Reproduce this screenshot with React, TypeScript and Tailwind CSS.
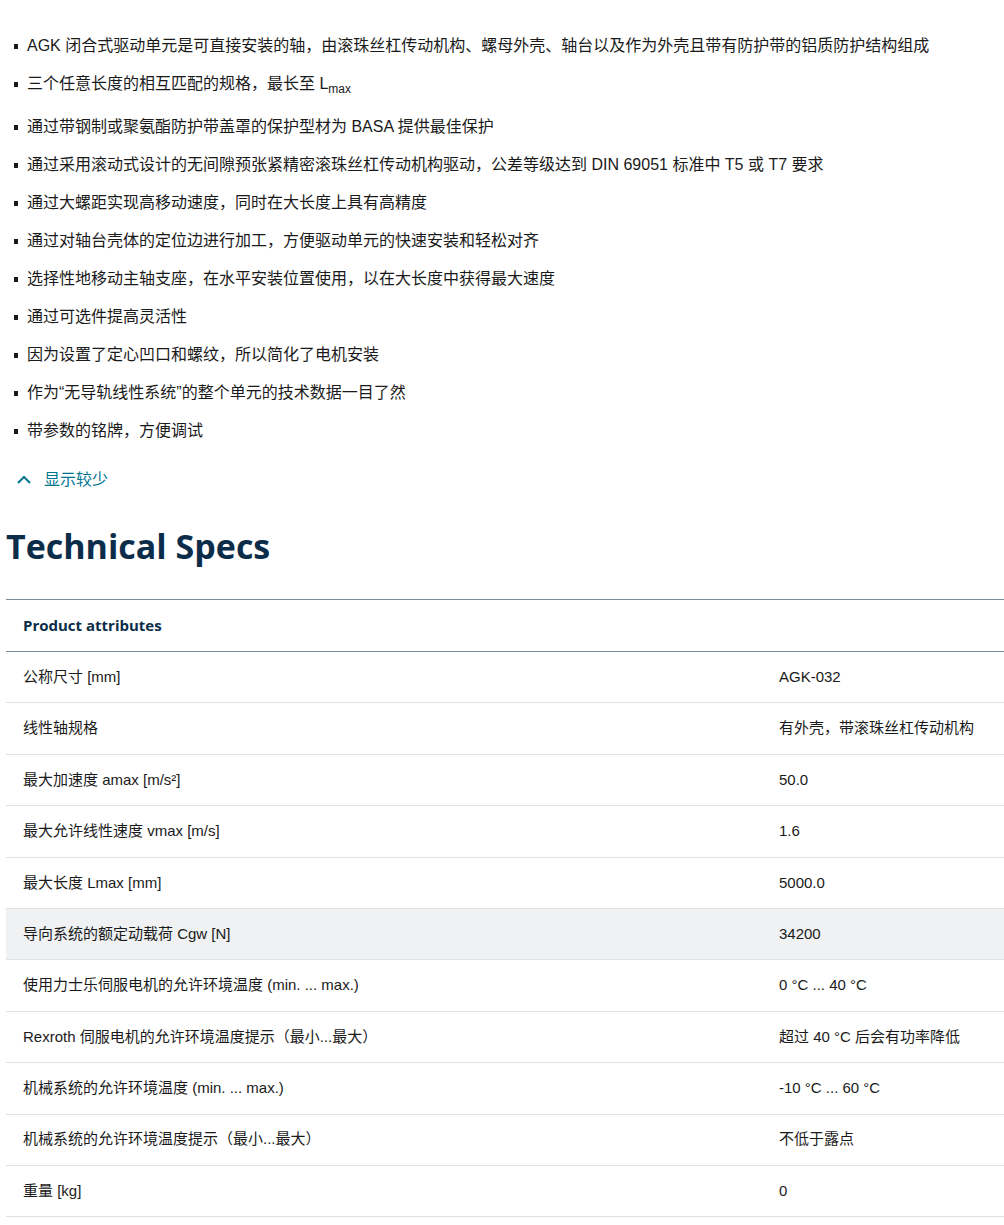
import React from "react";

const bullets: React.ReactNode[] = [
  "AGK 闭合式驱动单元是可直接安装的轴，由滚珠丝杠传动机构、螺母外壳、轴台以及作为外壳且带有防护带的铝质防护结构组成",
  <>三个任意长度的相互匹配的规格，最长至 L<sub className="text-[12px] relative top-[4px] align-baseline">max</sub></>,
  "通过带钢制或聚氨酯防护带盖罩的保护型材为 BASA 提供最佳保护",
  "通过采用滚动式设计的无间隙预张紧精密滚珠丝杠传动机构驱动，公差等级达到 DIN 69051 标准中 T5 或 T7 要求",
  "通过大螺距实现高移动速度，同时在大长度上具有高精度",
  "通过对轴台壳体的定位边进行加工，方便驱动单元的快速安装和轻松对齐",
  "选择性地移动主轴支座，在水平安装位置使用，以在大长度中获得最大速度",
  "通过可选件提高灵活性",
  "因为设置了定心凹口和螺纹，所以简化了电机安装",
  "作为“无导轨线性系统”的整个单元的技术数据一目了然",
  "带参数的铭牌，方便调试",
];

const rows: [string, string][] = [
  ["公称尺寸 [mm]", "AGK-032"],
  ["线性轴规格", "有外壳，带滚珠丝杠传动机构"],
  ["最大加速度 amax [m/s²]", "50.0"],
  ["最大允许线性速度 vmax [m/s]", "1.6"],
  ["最大长度 Lmax [mm]", "5000.0"],
  ["导向系统的额定动载荷 Cgw [N]", "34200"],
  ["使用力士乐伺服电机的允许环境温度 (min. ... max.)", "0 °C ... 40 °C"],
  ["Rexroth 伺服电机的允许环境温度提示（最小...最大）", "超过 40 °C 后会有功率降低"],
  ["机械系统的允许环境温度 (min. ... max.)", "-10 °C ... 60 °C"],
  ["机械系统的允许环境温度提示（最小...最大）", "不低于露点"],
  ["重量 [kg]", "0"],
];

export default function App() {
  return (
    <div className="w-[1004px] bg-white text-[#1a1a1a]" style={{ fontFamily: '"Liberation Sans","Noto Sans CJK SC",sans-serif' }}>
      <ul className="pt-[33px] pl-[14px]">
        {bullets.map((b, i) => (
          <li key={i} className={`flex items-start text-[16px] leading-[26px] ${i === 1 ? "h-[43px]" : "h-[38px]"}`}>
            <span className="w-[4px] h-[5px] bg-[#1a1a1a] mt-[11px] mr-[9px] shrink-0" />
            <span>{b}</span>
          </li>
        ))}
      </ul>
      <div className="flex items-center gap-[12px] pl-[16px] mt-[12px] text-[16px] text-[#00768f]">
        <svg width="16" height="10" viewBox="0 0 16 10"><path d="M2 8 L8 2 L14 8" fill="none" stroke="#00768f" strokeWidth="2" /></svg>
        <span>显示较少</span>
      </div>
      <h2 className="pl-[6px] mt-[34px] text-[34px] font-bold text-[#0b2d4a] leading-[40px]" style={{ fontFamily: '"Open Sans","Noto Sans CJK SC",sans-serif' }}>Technical Specs</h2>
      <div className="ml-[6px] mt-[33px] border-t border-[#7d8b96]">
        <div className="h-[52px] flex items-center pl-[17px] text-[15px] font-bold text-[#0b2d4a] border-b border-[#7d8b96]" style={{ fontFamily: '"Open Sans",sans-serif' }}>Product attributes</div>
        {rows.map(([k, v], i) => (
          <div key={i} className={`h-[51.4px] flex items-center text-[15px] border-b border-[#dfe2e5] ${i === 5 ? "bg-[#eff1f2]" : ""}`}>
            <div className="pl-[17px] w-[773px]">{k}</div>
            <div>{v}</div>
          </div>
        ))}
      </div>
    </div>
  );
}
